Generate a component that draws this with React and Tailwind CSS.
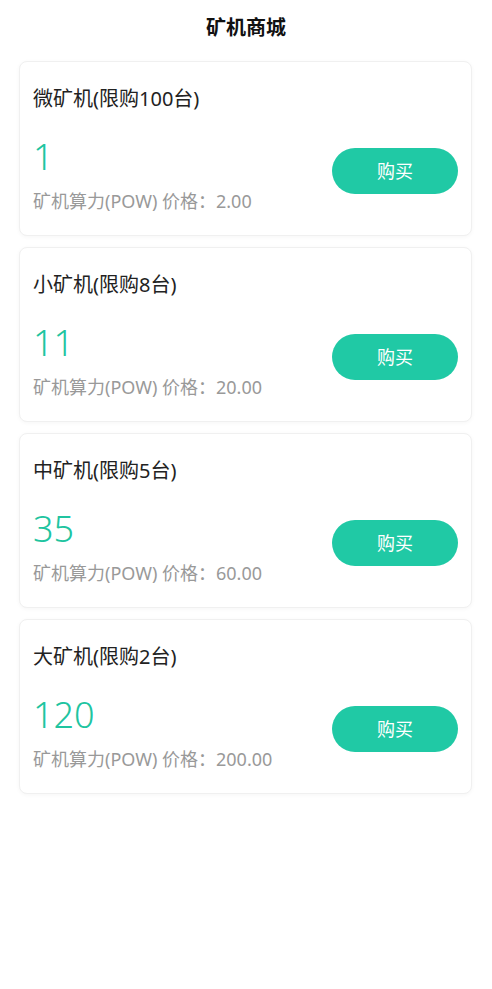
import React from 'react';

const machines = [
  { name: '微矿机(限购100台)', power: '1', price: '2.00' },
  { name: '小矿机(限购8台)', power: '11', price: '20.00' },
  { name: '中矿机(限购5台)', power: '35', price: '60.00' },
  { name: '大矿机(限购2台)', power: '120', price: '200.00' },
];

const MachineCard = ({ item }) => (
  <div className="h-[175px] bg-white border border-[#f0f0f0] rounded-[8px] shadow-[0_1px_4px_rgba(0,0,0,0.04)] pl-[13px] pr-[13px] pt-[25px]">
    <div className="text-[20px] leading-[24px] text-[#222]">{item.name}</div>
    <div className="flex items-center justify-between mt-[26px]">
      <div>
        <div className="text-[36px] leading-[40px] text-[#20c4a0] font-light">{item.power}</div>
        <div className="text-[18px] leading-[24px] text-[#999] mt-[12px]">
          矿机算力(POW) 价格：{item.price}
        </div>
      </div>
      <button className="w-[126px] h-[46px] mb-[8px] rounded-full bg-[#20c9a5] text-white text-[18px]">
        购买
      </button>
    </div>
  </div>
);

const App = () => {
  return (
    <div className="min-h-screen w-full bg-white font-['Noto_Sans','Noto_Sans_CJK_SC',sans-serif]">
      <div className="h-[56px] flex items-center justify-center">
        <h1 className="text-[20px] font-bold text-[#111]">矿机商城</h1>
      </div>
      <div className="pl-[19px] pr-[20px] mt-[5px] flex flex-col gap-[11px]">
        {machines.map((m) => (
          <MachineCard key={m.name} item={m} />
        ))}
      </div>
    </div>
  );
};

export default App;
